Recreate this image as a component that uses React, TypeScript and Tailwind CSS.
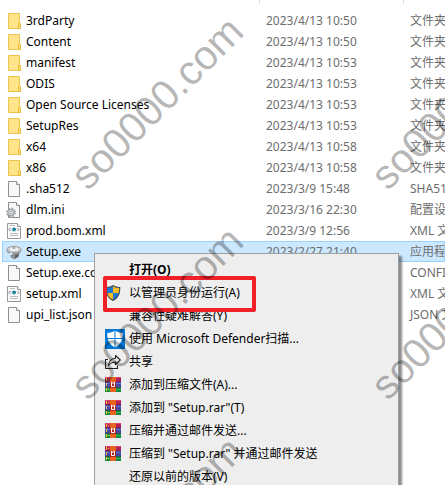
import React from 'react';

type FileIcon = 'folder' | 'blank' | 'config' | 'xml' | 'installer';

interface FileRow {
  name: string;
  modified: string;
  type: string;
  icon: FileIcon;
  selected?: boolean;
}

const files: FileRow[] = [
  { name: '3rdParty', modified: '2023/4/13 10:50', type: '文件夹', icon: 'folder' },
  { name: 'Content', modified: '2023/4/13 10:50', type: '文件夹', icon: 'folder' },
  { name: 'manifest', modified: '2023/4/13 10:53', type: '文件夹', icon: 'folder' },
  { name: 'ODIS', modified: '2023/4/13 10:53', type: '文件夹', icon: 'folder' },
  { name: 'Open Source Licenses', modified: '2023/4/13 10:53', type: '文件夹', icon: 'folder' },
  { name: 'SetupRes', modified: '2023/4/13 10:53', type: '文件夹', icon: 'folder' },
  { name: 'x64', modified: '2023/4/13 10:58', type: '文件夹', icon: 'folder' },
  { name: 'x86', modified: '2023/4/13 10:58', type: '文件夹', icon: 'folder' },
  { name: '.sha512', modified: '2023/3/9 15:48', type: 'SHA512 文件', icon: 'blank' },
  { name: 'dlm.ini', modified: '2023/3/16 22:30', type: '配置设置', icon: 'config' },
  { name: 'prod.bom.xml', modified: '2023/3/9 12:56', type: 'XML 文档', icon: 'xml' },
  { name: 'Setup.exe', modified: '2023/2/27 21:40', type: '应用程序', icon: 'installer', selected: true },
  { name: 'Setup.exe.config', modified: '', type: 'CONFIG 文件', icon: 'blank' },
  { name: 'setup.xml', modified: '', type: 'XML 文档', icon: 'xml' },
  { name: 'upi_list.json', modified: '', type: 'JSON 文件', icon: 'blank' },
];

const FolderIcon = () => (
  <svg width="16" height="16" viewBox="0 0 16 16" aria-hidden="true">
    <path d="M2.5.5h11v9.5l1 .5v5h-12z" fill="#ffe48c" stroke="#ebc54c" />
    <path d="M12.5 15.5v-5l1-1 1 1v5z" fill="#ffdf7a" stroke="#e6bd3c" />
  </svg>
);

const Sheet = () => (
  <>
    <path d="M2.5.5h8l3 3v12h-11z" fill="#f8f8f8" stroke="#8f8f8f" />
    <path d="M10.5.5v3h3" fill="#fff" stroke="#8f8f8f" />
  </>
);

const BlankIcon = () => (
  <svg width="16" height="16" viewBox="0 0 16 16" aria-hidden="true">
    <Sheet />
  </svg>
);

const ConfigIcon = () => (
  <svg width="16" height="16" viewBox="0 0 16 16" className="overflow-visible" aria-hidden="true">
    <Sheet />
    <circle cx="5" cy="10.5" r="4.2" fill="none" stroke="#9aa1a5" strokeWidth="1.6" strokeDasharray="1.7 1.6" />
    <circle cx="5" cy="10.5" r="3.2" fill="#d5dadd" stroke="#9aa1a5" strokeWidth="1.1" />
    <circle cx="5" cy="10.5" r="1.3" fill="#fff" stroke="#8b9398" strokeWidth=".8" />
  </svg>
);

const XmlIcon = () => (
  <svg width="16" height="16" viewBox="0 0 16 16" aria-hidden="true">
    <path d="M1.5.5h10l3 3v12h-13z" fill="#fafafa" stroke="#9a9a9a" />
    <path d="M11.5.5v3h3" fill="#fff" stroke="#9a9a9a" />
    <path d="M4 2.5h5M4 10.5h8M4 12.5h8" stroke="#bcbcbc" />
    <circle cx="8" cy="6.5" r="2.1" fill="#2fa6a2" />
    <circle cx="8.3" cy="6" r="1.1" fill="#225f9c" />
    <path d="M4.5 5 3 6.5 4.5 8M11.5 5 13 6.5 11.5 8" fill="none" stroke="#62658a" strokeWidth=".9" />
  </svg>
);

const InstallerIcon = () => (
  <svg width="16" height="16" viewBox="0 0 16 16" aria-hidden="true">
    <path d="M3.500 8h10l-1 4.500-4.500 3-3.500-2.500z" fill="#8b9094" />
    <path d="M9 9h4.500l-1 3.500L9 15z" fill="#5f6367" />
    <path d="M.8 5.500h14.400v2.300c-2.500 3.600-11.900 3.600-14.400 0z" fill="#9da2a6" />
    <ellipse cx="8" cy="5.500" rx="7.200" ry="3.200" fill="#c9cdd0" stroke="#8d9296" strokeWidth=".7" />
    <ellipse cx="8" cy="5.200" rx="4.300" ry="1.900" fill="#eef0f2" />
    <path d="M6.700 1h2.600v4H6.700z" fill="#a3a8ac" />
    <ellipse cx="8" cy="1.300" rx="1.600" ry=".8" fill="#dfe2e4" />
    <circle cx="5" cy="9.800" r="1.400" fill="#eceff0" />
  </svg>
);

const fileIcons: Record<FileIcon, React.FC> = {
  folder: FolderIcon,
  blank: BlankIcon,
  config: ConfigIcon,
  xml: XmlIcon,
  installer: InstallerIcon,
};

const UacShield = () => (
  <svg width="16" height="16" viewBox="0 0 16 16" aria-hidden="true">
    <path d="M8 .5C6 2 3.500 2.500 1.200 2.500 1 8.500 3 13 8 15.500z" fill="#1878cf" />
    <path d="M8 .5c2 1.500 4.500 2 6.800 2C15 8.500 13 13 8 15.500z" fill="#fbbd22" />
    <path d="M8 8h6.300C13.600 11.500 11.500 14 8 15.500z" fill="#1878cf" />
    <path d="M8 8H1.700C2.400 11.500 4.500 14 8 15.500z" fill="#fbbd22" />
    <path d="M8 .7C6 2.200 3.500 2.600 1.300 2.600 1 8.500 3 13 8 15.400c5-2.400 7-6.900 6.700-12.800C12.500 2.600 10 2.200 8 .7z" fill="none" stroke="#4d5358" strokeWidth="1.200" />
  </svg>
);

const DefenderIcon = () => (
  <svg width="20" height="20" viewBox="0 0 20 20" aria-hidden="true">
    <path d="M0 0h20v20H0z" fill="#0078d7" />
    <path d="M10 1.500C8 3 5 4 2.200 4c-.2 7 2.300 11.500 7.800 14.500C15.500 15.500 18 11 17.800 4 15 4 12 3 10 1.500z" fill="#fff" />
    <path d="M10 1v18M2 9.500h16" stroke="#0078d7" />
  </svg>
);

const ShareIcon = () => (
  <svg width="16" height="16" viewBox="0 0 16 16" fill="none" stroke="#222" strokeWidth="1.100" aria-hidden="true">
    <path d="M3 5.500H.500v9h12v-3" />
    <path d="M10.500 1.500 15.300 6l-4.800 4.500V8C7.500 8 5.500 9 3.500 11.500c.3-4 3-7 7-7.300z" strokeLinejoin="round" />
  </svg>
);

const RarIcon = () => (
  <svg width="16" height="16" viewBox="0 0 16 16" aria-hidden="true">
    <path d="M0 0h16v15H0z" fill="#4a2a4a" />
    <path d="M0 0h16v4.500H0z" fill="#b81f55" />
    <path d="M0 5h16v5H0z" fill="#4446a8" />
    <path d="M0 10.500h16V15H0z" fill="#138a3f" />
    <path d="M0 .5h16" stroke="#d9436f" />
    <path d="M11 6.500h5M0 6.500h5" stroke="#6b70cf" />
    <path d="M0 12.500h16" stroke="#2bb45a" />
    <path d="M1 1h1v3H1zM1 6h1v3H1zM1 11h1v3H1zM3 2h1v1H3zM3 12h1v1H3z" fill="#f4c430" />
    <path d="M5 0h6v15H5z" fill="#e8641e" />
    <path d="M5 5h6v6H5z" fill="#b2261d" />
    <path d="M6.500 5v4.500h3V5M8 5v2" fill="none" stroke="#fff" />
  </svg>
);

interface MenuEntry {
  label: string;
  icon?: React.FC;
  bold?: boolean;
}

const menu: MenuEntry[] = [
  { label: '打开(O)', bold: true },
  { label: '以管理员身份运行(A)', icon: UacShield },
  { label: '兼容性疑难解答(Y)' },
  { label: '使用 Microsoft Defender扫描...', icon: DefenderIcon },
  { label: '共享', icon: ShareIcon },
  { label: '添加到压缩文件(A)...', icon: RarIcon },
  { label: '添加到 "Setup.rar"(T)', icon: RarIcon },
  { label: '压缩并通过邮件发送...', icon: RarIcon },
  { label: '压缩到 "Setup.rar" 并通过邮件发送', icon: RarIcon },
  { label: '还原以前的版本(V)' },
];

const FileList = () => (
  <div className="pl-0.5">
    <div className="flex h-[10px] items-start">
      <div className="h-1 w-[258px] border-r border-[#dedede]" />
      <div className="h-1 w-36 border-r border-[#dedede]" />
    </div>
    <table className="w-full table-fixed border-collapse whitespace-nowrap">
      <colgroup>
        <col className="w-[264px]" />
        <col className="w-36" />
        <col />
      </colgroup>
      <tbody>
        {files.map((file) => {
          const Icon = fileIcons[file.icon];
          return (
            <tr
              key={file.name}
              className={
                file.selected
                  ? 'h-[21px] bg-[#cce8ff] outline outline-1 -outline-offset-1 outline-[#99d1ff]'
                  : 'h-[21px]'
              }
            >
              <td className="p-0">
                <div className="flex items-center gap-1 pl-1 text-black">
                  <Icon />
                  <span>{file.name}</span>
                </div>
              </td>
              <td className="p-0 text-[#6d6d6d]">{file.modified}</td>
              <td className="p-0 text-[#6d6d6d]">{file.type}</td>
            </tr>
          );
        })}
      </tbody>
    </table>
  </div>
);

const ContextMenu = () => (
  <div
    role="menu"
    className="absolute left-[94px] top-[253px] w-[305px] border border-[#a0a0a0] bg-[#eeeeee] py-1 shadow-[3px_3px_2px_rgba(0,0,0,0.45)]"
  >
    {menu.map(({ label, icon: Icon, bold }) => (
      <button
        key={label}
        type="button"
        role="menuitem"
        className="flex h-[23px] w-full items-center gap-1 pl-[10px] text-left text-black"
      >
        <span className="w-5 shrink-0">{Icon && <Icon />}</span>
        <span className={bold ? 'font-bold' : ''}>{label}</span>
      </button>
    ))}
  </div>
);

const Watermark = ({ className }: { className: string }) => (
  <div
    className={`pointer-events-none absolute origin-bottom-left -rotate-45 font-['Liberation_Sans',sans-serif] text-[41px] leading-10 text-black/30 select-none ${className}`}
  >
    so0000.com
  </div>
);

export default function App() {
  return (
    <div className="relative h-screen overflow-hidden bg-white font-['Noto_Sans','Noto_Sans_CJK_SC',sans-serif] text-[12px] leading-4">
      <FileList />
      <ContextMenu />
      <div className="pointer-events-none absolute left-[103px] top-[276px] h-9 w-[153px] rounded-xs border-4 border-[#f01f28]" />
      <Watermark className="left-[92px] top-[156px]" />
      <Watermark className="left-[392px] top-[156px]" />
      <Watermark className="left-[92px] top-[366px]" />
      <Watermark className="left-[392px] top-[366px]" />
      <Watermark className="left-[92px] top-[576px]" />
    </div>
  );
}
